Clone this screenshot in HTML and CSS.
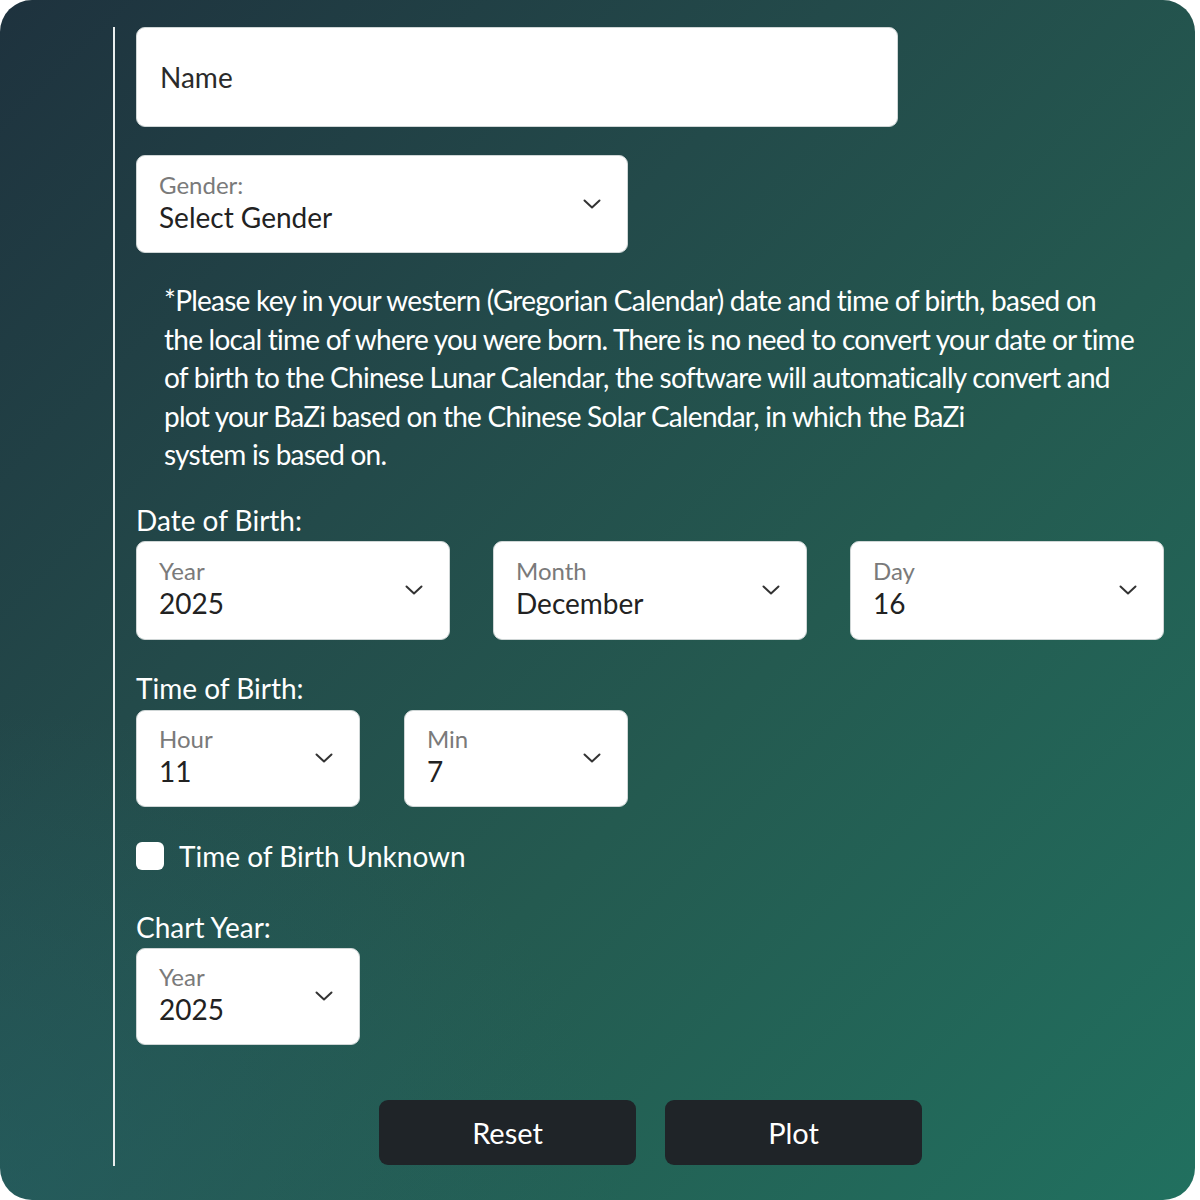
FILE: index.html
```html
<!DOCTYPE html>
<html lang="en">
<head>
<meta charset="utf-8">
<title>BaZi Chart Form</title>
<link rel="stylesheet" href="styles.css">
</head>
<body>
<div class="card">
  <form class="form">
    <div class="input name-input"><span class="placeholder">Name</span></div>

    <div class="select gender">
      <div class="sel-text"><span class="sel-label">Gender:</span><span class="sel-value">Select Gender</span></div>
      <svg class="chev" viewBox="0 0 18 10"><path d="M1.5 1.5 L9 8.5 L16.5 1.5"/></svg>
    </div>

    <p class="note">*Please key in your western (Gregorian Calendar) date and time of birth, based on<br>the local time of where you were born. There is no need to convert your date or time<br>of birth to the Chinese Lunar Calendar, the software will automatically convert and<br>plot your BaZi based on the Chinese Solar Calendar, in which the BaZi<br>system is based on.</p>

    <div class="group-label dob-label">Date of Birth:</div>
    <div class="row three">
      <div class="select">
        <div class="sel-text"><span class="sel-label">Year</span><span class="sel-value">2025</span></div>
        <svg class="chev" viewBox="0 0 18 10"><path d="M1.5 1.5 L9 8.5 L16.5 1.5"/></svg>
      </div>
      <div class="select">
        <div class="sel-text"><span class="sel-label">Month</span><span class="sel-value">December</span></div>
        <svg class="chev" viewBox="0 0 18 10"><path d="M1.5 1.5 L9 8.5 L16.5 1.5"/></svg>
      </div>
      <div class="select">
        <div class="sel-text"><span class="sel-label">Day</span><span class="sel-value">16</span></div>
        <svg class="chev" viewBox="0 0 18 10"><path d="M1.5 1.5 L9 8.5 L16.5 1.5"/></svg>
      </div>
    </div>

    <div class="group-label tob-label">Time of Birth:</div>
    <div class="row two">
      <div class="select small">
        <div class="sel-text"><span class="sel-label">Hour</span><span class="sel-value">11</span></div>
        <svg class="chev" viewBox="0 0 18 10"><path d="M1.5 1.5 L9 8.5 L16.5 1.5"/></svg>
      </div>
      <div class="select small">
        <div class="sel-text"><span class="sel-label">Min</span><span class="sel-value">7</span></div>
        <svg class="chev" viewBox="0 0 18 10"><path d="M1.5 1.5 L9 8.5 L16.5 1.5"/></svg>
      </div>
    </div>

    <label class="check-row"><span class="checkbox"></span><span class="check-text">Time of Birth Unknown</span></label>

    <div class="group-label chart-label">Chart Year:</div>
    <div class="select small">
      <div class="sel-text"><span class="sel-label">Year</span><span class="sel-value">2025</span></div>
      <svg class="chev" viewBox="0 0 18 10"><path d="M1.5 1.5 L9 8.5 L16.5 1.5"/></svg>
    </div>

    <div class="buttons">
      <button type="button" class="btn">Reset</button>
      <button type="button" class="btn">Plot</button>
    </div>
  </form>
</div>
</body>
</html>
```

FILE: styles.css
```css
* { box-sizing: border-box; }
html, body { margin: 0; padding: 0; background: #ffffff; }
body { width: 1200px; height: 1200px; font-family: Lato, "Open Sans", sans-serif; }

.card {
  width: 1195px;
  height: 1200px;
  border-radius: 32px;
  overflow: hidden;
  background:
    radial-gradient(ellipse 900px 700px at 0% 100%, rgba(38, 96, 102, 0.55), rgba(38, 96, 102, 0) 70%),
    linear-gradient(135deg, #1e323e 0%, #234a4a 35%, #245a50 60%, #21705f 100%);
  padding: 27px 0 0 113px;
}

.form {
  border-left: 2px solid #e9eeee;
  height: 1139px;
  padding: 0 30px 0 21px;
  width: 1087px;
}

.input, .select {
  background: #ffffff;
  border-radius: 9px;
  border: 1px solid #cfd6d6;
}

.name-input {
  width: 762px;
  height: 100px;
  display: flex;
  align-items: center;
  padding-left: 23px;
}
.placeholder { font-size: 28px; color: #2a2a2a; }

.select {
  height: 99px;
  display: flex;
  align-items: center;
  justify-content: space-between;
  padding: 0 26px 0 22px;
}
.gender { width: 492px; height: 98px; margin-top: 28px; }
.sel-text { display: flex; flex-direction: column; margin-top: 3px; }
.sel-label { font-size: 24px; color: #7a7a7a; line-height: 28px; margin-top: -6px; }
.sel-value { font-size: 28px; color: #222222; line-height: 34px; margin-top: 1px; }
.chev { width: 18px; height: 10px; fill: none; stroke: #333333; stroke-width: 2; stroke-linecap: round; stroke-linejoin: round; }

.note {
  margin: 28px 0 0 28px;
  font-size: 28px;
  line-height: 38.5px;
  color: #ffffff;
  letter-spacing: -0.75px;
  white-space: nowrap;
}

.group-label {
  color: #ffffff;
  font-size: 28px;
  line-height: 30px;
  height: 30px;
  margin-bottom: 6px;
}
.dob-label { margin-top: 31px; }
.tob-label { margin-top: 33px; margin-bottom: 7px; }
.chart-label { margin-top: 42px; margin-bottom: 6px; }

.row { display: flex; }
.row.three { gap: 43px; }
.row.three .select { width: 314px; }
.row.two { gap: 44px; }
.select.small { width: 224px; height: 97px; }

.check-row {
  display: flex;
  align-items: center;
  gap: 15px;
  margin-top: 35px;
  height: 28px;
}
.checkbox {
  width: 28px;
  height: 28px;
  border-radius: 6px;
  background: #ffffff;
}
.check-text { color: #ffffff; font-size: 28px; }

.buttons {
  display: flex;
  justify-content: center;
  gap: 29px;
  margin-top: 55px;
  width: 1029px;
}
.btn {
  width: 257px;
  height: 65px;
  border: none;
  border-radius: 9px;
  background: #1f2428;
  color: #ffffff;
  font-family: Lato, sans-serif;
  font-size: 29px;
}
```
